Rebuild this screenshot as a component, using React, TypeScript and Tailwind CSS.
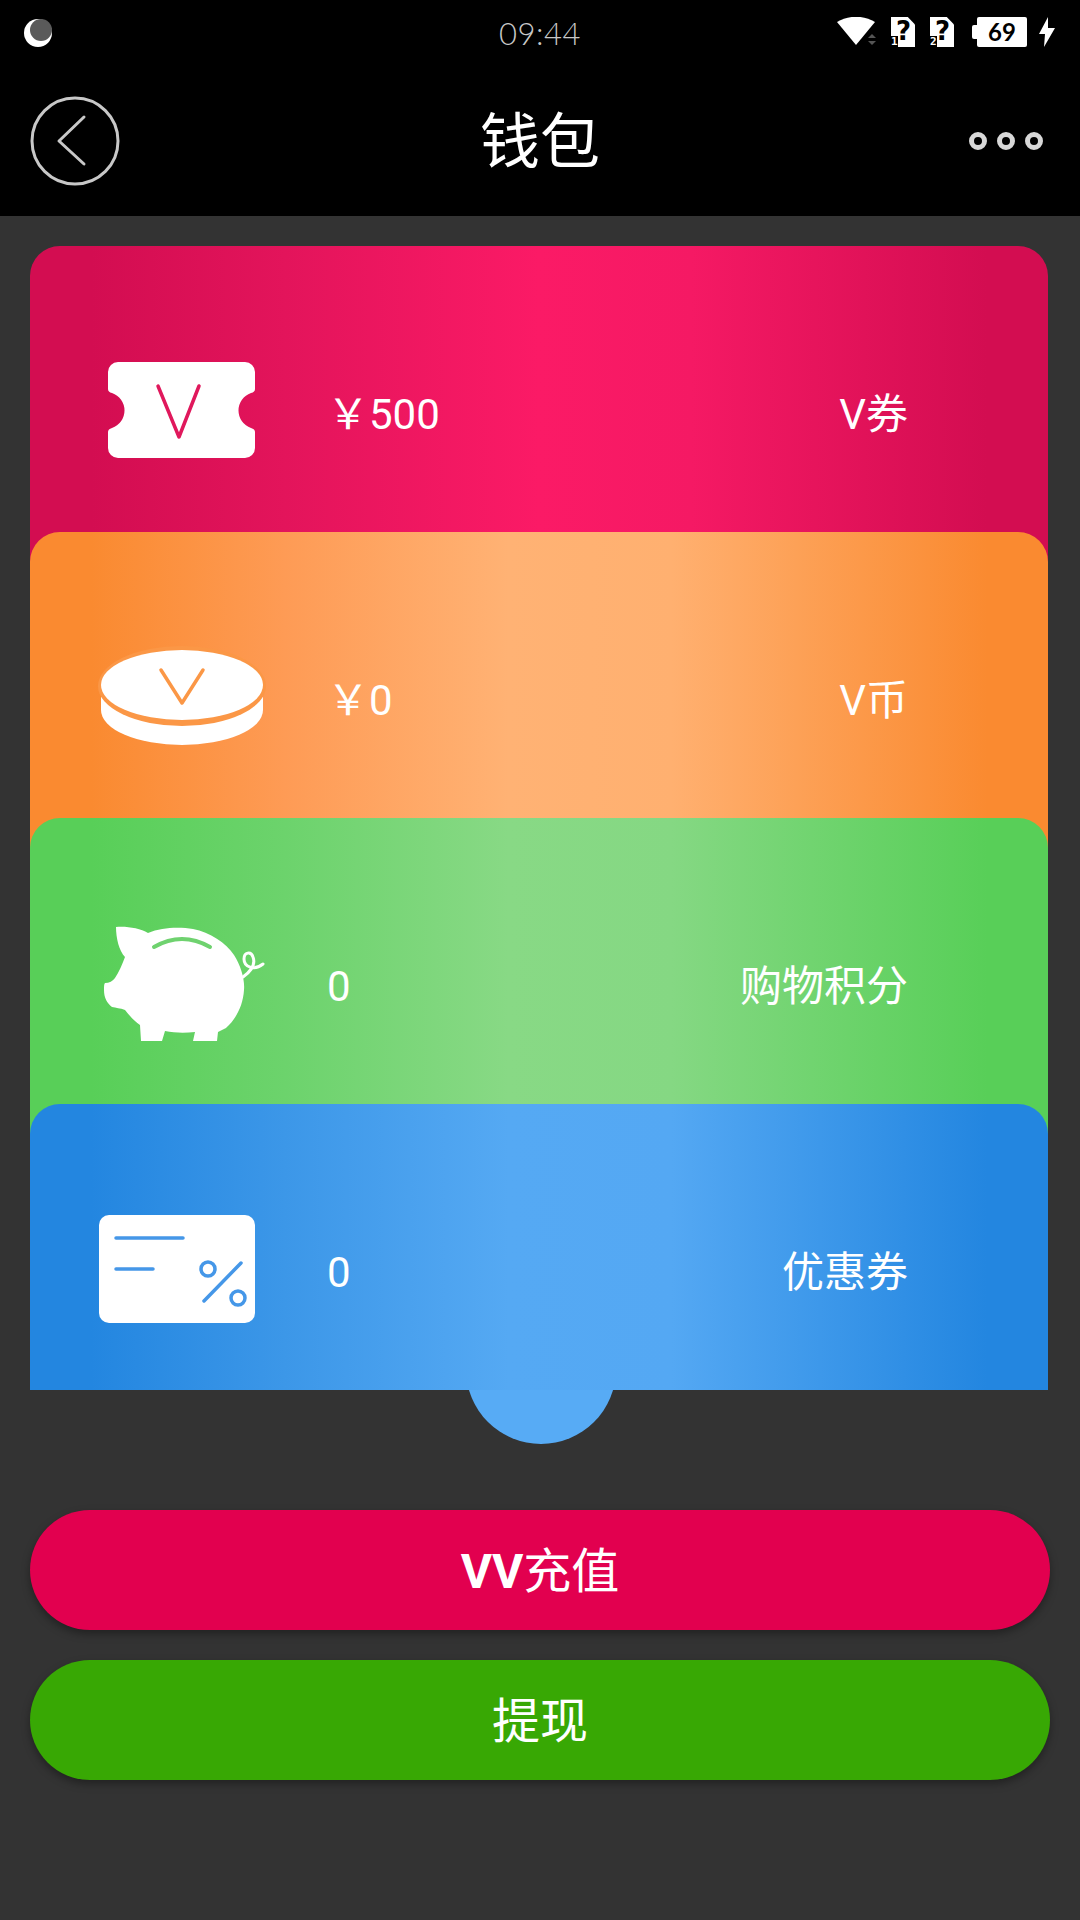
const cjk = "font-['Roboto','Noto_Sans_CJK_SC',sans-serif]";

function TicketIcon() {
    return (
        <svg className="h-[130px] w-[200px] shrink-0" viewBox="0 0 200 130" fill="none">
            <path fill="#fff" d="M38 16H165a10 10 0 0 1 10 10V43Q175 46 171 47A18.5 18.5 0 0 0 171 82Q175 83 175 86V102a10 10 0 0 1-10 10H38a10 10 0 0 1-10-10V86Q28 83 32 82A18.5 18.5 0 0 0 32 47Q28 46 28 43V26a10 10 0 0 1 10-10Z" />
            <path stroke="#e0185c" strokeWidth={3.5} strokeLinecap="round" strokeLinejoin="round" d="M78 40 99 91 119 40" />
        </svg>
    );
}

function CoinIcon() {
    return (
        <svg className="h-[130px] w-[200px] shrink-0" viewBox="0 0 200 130" fill="none">
            <ellipse cx={102} cy={78} rx={81} ry={35} fill="#fff" />
            <rect x={21} y={65} width={162} height={13} fill="#fff" />
            <ellipse cx={102} cy={54} rx={84} ry={40} fill="#fb9746" />
            <ellipse cx={102} cy={53} rx={81} ry={35} fill="#fff" />
            <path stroke="#fb9746" strokeWidth={3.5} strokeLinecap="round" strokeLinejoin="round" d="M81 38 102 71 123 38" />
        </svg>
    );
}

function PigIcon() {
    return (
        <svg className="h-[130px] w-[200px] shrink-0" viewBox="0 0 200 130" fill="none">
            <path fill="#fff" d="M36 9C46 8 60 10 68 15C82 9 100 9 113 11C130 14 146 25 154 37C161 48 165 62 164 72C163 88 156 101 146 110L138 114L137 123H113L115 114C105 115 95 115 85 113L82 123H61L60 107C54 103 49 97 45 92C40 90 36 90 32 89C27 85 24 80 24 72C24 68 24 66 25 65C29 65 33 63 35 60C39 54 42 47 45 39C39 33 36 20 36 9Z" />
            <path stroke="#6fd26f" strokeWidth={4} strokeLinecap="round" d="M74 29Q102 13 130 29" />
            <path stroke="#fff" strokeWidth={3} strokeLinecap="round" d="M163 59C170 54 176 47 173 39C171 33 164 34 164 41C164 49 174 53 183 46" />
        </svg>
    );
}

function CouponIcon() {
    return (
        <svg className="h-[130px] w-[200px] shrink-0" viewBox="0 0 200 130" fill="none">
            <rect x={19} y={11} width={156} height={108} rx={10} fill="#fff" />
            <g stroke="#4597e8" strokeWidth={3.5} strokeLinecap="round">
                <path d="M36 34H103M36 65H73M124 97 161 59" />
                <circle cx={128} cy={65} r={7} />
                <circle cx={158} cy={94} r={7} />
            </g>
        </svg>
    );
}

function SimIcon(props: { slot: string }) {
    return (
        <div className="relative h-[30px] w-[24px] bg-white [clip-path:polygon(0_0,70%_0,100%_25%,100%_100%,0_100%)]">
            <span className="absolute left-[5px] top-[-1px] font-['DejaVu_Sans',sans-serif] text-[26px] font-bold leading-[30px] text-black">?</span>
            <span className="absolute bottom-0 left-0 h-[11px] w-[7px] overflow-hidden bg-black font-['DejaVu_Sans_Mono',monospace] text-[11px] font-bold leading-[11px] text-white">{props.slot}</span>
        </div>
    );
}

function StatusBar() {
    return (
        <div className="relative flex h-[64px] items-center justify-between pl-[24px] pr-[25px]">
            <svg className="h-[30px] w-[30px]" viewBox="0 0 30 30">
                <circle cx={14} cy={16} r={14} fill="#fff" />
                <circle cx={17} cy={13} r={11} fill="#5a5a5a" />
            </svg>
            <span className="absolute left-0 right-0 top-[14px] text-center font-['Lato',sans-serif] text-[31px] font-light leading-[38px] tracking-[0.5px] text-[#c8c8c8]">09:44</span>
            <div className="flex items-center">
                <svg className="h-[30px] w-[44px]" viewBox="0 0 44 30">
                    <path fill="#fff" d="M0 5C11-2 27-2 38 5L19 28Z" />
                    <path fill="#555" d="M35 17 39 21H31ZM31 24H39L35 28Z" />
                </svg>
                <div className="ml-[10px] flex gap-[15px]">
                    <SimIcon slot="1" />
                    <SimIcon slot="2" />
                </div>
                <div className="ml-[18px] flex items-center">
                    <div className="h-[14px] w-[5px] rounded-l-[2px] bg-white" />
                    <div className="flex h-[30px] w-[50px] items-center justify-center rounded-[2px] bg-white font-['Lato',sans-serif] text-[24px] font-bold text-black">69</div>
                </div>
                <svg className="ml-[12px] h-[30px] w-[16px]" viewBox="0 0 16 30">
                    <path fill="#fff" d="M9 0 0 17H6L5 30 16 11H9Z" />
                </svg>
            </div>
        </div>
    );
}

function Header() {
    return (
        <div className="bg-black">
            <StatusBar />
            <div className="relative flex h-[152px] items-center justify-between pt-[2px] pl-[30px] pr-[37px]">
                <svg className="h-[90px] w-[90px]" viewBox="0 0 90 90" fill="none" stroke="#c8c8c8" strokeWidth={3} strokeLinecap="round" strokeLinejoin="round">
                    <circle cx={45} cy={45} r={43} />
                    <path d="M54 21 29 45 54 68" />
                </svg>
                <h1 className={`absolute left-0 right-0 top-[39px] text-center text-[60px] leading-[80px] text-white ${cjk}`}>钱包</h1>
                <div className="flex gap-[10px]">
                    <div className="h-[18px] w-[18px] rounded-full border-[5px] border-[#d8d8d8]" />
                    <div className="h-[18px] w-[18px] rounded-full border-[5px] border-[#d8d8d8]" />
                    <div className="h-[18px] w-[18px] rounded-full border-[5px] border-[#d8d8d8]" />
                </div>
            </div>
        </div>
    );
}

const cards = [
    {
        icon: <TicketIcon />,
        value: "￥500",
        label: "V券",
        className: "h-[316px] pb-[30px] bg-[linear-gradient(90deg,#d30d51_6%,#e3145b_25%,#fb1a66_50%,#f51964_65%,#d30d51_94%)]",
    },
    {
        icon: <CoinIcon />,
        value: "￥0",
        label: "V币",
        className: "-mt-[30px] h-[316px] pb-[30px] bg-[linear-gradient(90deg,#fa8a30_6%,#fe9b55_25%,#ffb274_47%,#ffb070_63%,#fa8a30_94%)]",
    },
    {
        icon: <PigIcon />,
        value: "0",
        label: "购物积分",
        className: "-mt-[30px] h-[316px] pb-[30px] bg-[linear-gradient(90deg,#58cf58_6%,#6cd36c_25%,#88d985_47%,#85d883_63%,#58cf58_94%)]",
    },
    {
        icon: <CouponIcon />,
        value: "0",
        label: "优惠券",
        className: "-mt-[30px] h-[286px] bg-[linear-gradient(90deg,#2386e0_6%,#3c97e8_25%,#55a9f3_47%,#54a8f3_63%,#2386e0_94%)]",
    },
];

export default function App() {
    return (
        <div className="flex h-[1920px] w-[1080px] flex-col overflow-hidden bg-[#333333]">
            <Header />
            <div className="flex flex-col px-[30px] pt-[30px]">
                <div className="relative mr-[2px] flex flex-col">
                    <div className="absolute -bottom-[54px] left-[calc(50%+1.5px)] h-[150px] w-[150px] -translate-x-1/2 rounded-full bg-[#57abf5]" />
                    {cards.map(card => (
                        <div key={card.label} className={`relative flex items-center rounded-t-[30px] pl-[50px] pr-[140px] pt-[44px] text-[42px] text-white ${cjk} ${card.className}`}>
                            {card.icon}
                            <span className="ml-[47px] flex-1 pt-[8px] leading-[56px]">{card.value}</span>
                            <span className="pt-[8px] leading-[56px]">{card.label}</span>
                        </div>
                    ))}
                </div>
                <button type="button" className={`mt-[120px] h-[120px] rounded-[60px] bg-[#e2004f] pt-[4px] text-[48px] text-white shadow-[0_4px_8px_rgba(0,0,0,0.35)] ${cjk}`}><span className="font-bold">VV</span>充值</button>
                <button type="button" className={`mt-[30px] h-[120px] rounded-[60px] bg-[#38a804] pt-[4px] text-[48px] text-white shadow-[0_4px_8px_rgba(0,0,0,0.35)] ${cjk}`}>提现</button>
            </div>
        </div>
    );
}
